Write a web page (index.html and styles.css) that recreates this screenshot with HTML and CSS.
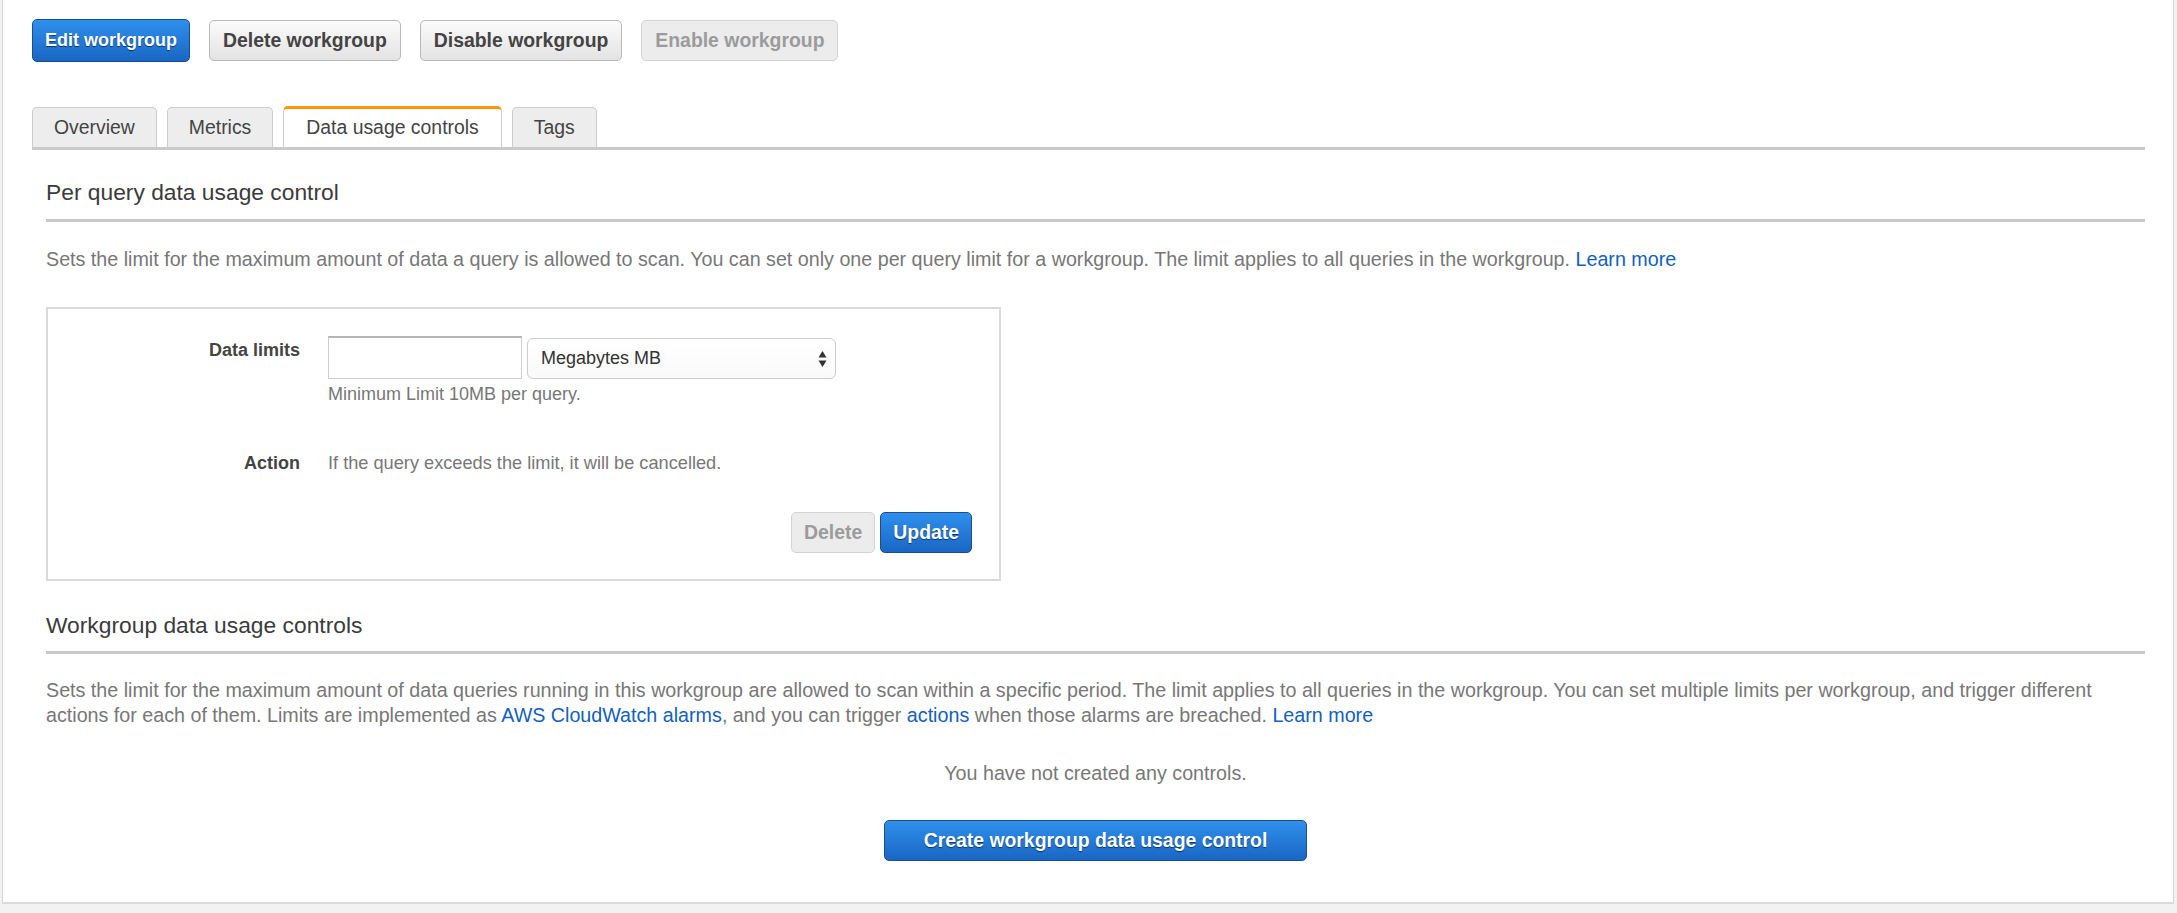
FILE: index.html
```html
<!DOCTYPE html>
<html lang="en">
<head>
<meta charset="utf-8">
<title>Workgroup - Data usage controls</title>
<link rel="stylesheet" href="styles.css">
</head>
<body>
<div class="panel">
  <div class="actions">
    <button class="btn btn-primary">Edit workgroup</button>
    <button class="btn btn-secondary">Delete workgroup</button>
    <button class="btn btn-secondary">Disable workgroup</button>
    <button class="btn btn-disabled">Enable workgroup</button>
  </div>

  <div class="tabs">
    <div class="tab">Overview</div>
    <div class="tab">Metrics</div>
    <div class="tab tab-active">Data usage controls</div>
    <div class="tab">Tags</div>
  </div>

  <div class="tab-content">
    <section class="section">
      <h2 class="section-title">Per query data usage control</h2>
      <p class="desc">Sets the limit for the maximum amount of data a query is allowed to scan. You can set only one per query limit for a workgroup. The limit applies to all queries in the workgroup. <a class="link" href="#">Learn more</a></p>

      <div class="form-box">
        <div class="form-row">
          <div class="form-label">Data limits</div>
          <div class="form-field">
            <div class="field-inputs">
              <div class="text-input"></div>
              <div class="select">
                <span>Megabytes MB</span>
                <svg class="select-arrows" width="9" height="18" viewBox="0 0 9 18"><path d="M4.5 1 L8.5 7.5 L0.5 7.5 Z" fill="#333"/><path d="M0.5 10.5 L8.5 10.5 L4.5 17 Z" fill="#333"/></svg>
              </div>
            </div>
            <div class="hint">Minimum Limit 10MB per query.</div>
          </div>
        </div>
        <div class="form-row form-row-action">
          <div class="form-label">Action</div>
          <div class="form-field">
            <div class="action-text">If the query exceeds the limit, it will be cancelled.</div>
          </div>
        </div>
        <div class="form-footer">
          <button class="btn btn-disabled btn-small">Delete</button>
          <button class="btn btn-primary btn-small">Update</button>
        </div>
      </div>
    </section>

    <section class="section section-second">
      <h2 class="section-title">Workgroup data usage controls</h2>
      <p class="desc">
        <span class="desc-line">Sets the limit for the maximum amount of data queries running in this workgroup are allowed to scan within a specific period. The limit applies to all queries in the workgroup. You can set multiple limits per workgroup, and trigger different</span>
        <span class="desc-line"><span>actions for each of them. Limits are implemented as</span> <a class="link" href="#">AWS CloudWatch alarms</a><span>, and you can trigger</span> <a class="link" href="#">actions</a> <span>when those alarms are breached.</span> <a class="link" href="#">Learn more</a></span>
      </p>
      <div class="empty">
        <p class="empty-text">You have not created any controls.</p>
        <button class="btn btn-primary btn-create">Create workgroup data usage control</button>
      </div>
    </section>
  </div>
</div>
</body>
</html>
```

FILE: styles.css
```css
* {
  box-sizing: border-box;
}

html, body {
  margin: 0;
  padding: 0;
}

body {
  background: #f2f2f2;
  font-family: "Liberation Sans", Arial, Helvetica, sans-serif;
  color: #444;
  width: 2177px;
  height: 913px;
  overflow: hidden;
}

.panel {
  margin-left: 2px;
  width: 2172px;
  height: 904px;
  background: #fff;
  border-left: 1px solid #d6d6d6;
  border-right: 1px solid #d6d6d6;
  border-bottom: 2px solid #dcdcdc;
  padding: 19px 28px 0 29px;
}

/* ---------- buttons ---------- */
.actions {
  display: flex;
  align-items: center;
  gap: 19px;
  height: 43px;
}

.btn {
  font-family: "Liberation Sans", Arial, Helvetica, sans-serif;
  font-weight: bold;
  font-size: 19.4px;
  border-radius: 5px;
  padding: 0 13px;
  height: 41px;
  cursor: pointer;
  white-space: nowrap;
}

.btn-primary {
  color: #fff;
  background: linear-gradient(#2f90ec, #1a66c4);
  border: 1px solid #1a4e8c;
  text-shadow: 0 1px 1px rgba(0, 0, 0, 0.55);
}

.actions .btn-primary {
  height: 43px;
  font-size: 18px;
  padding: 0 12px;
}

.btn-secondary {
  color: #444;
  background: linear-gradient(#fbfbfb, #e3e3e3);
  border: 1px solid #b8b8b8;
}

.btn-disabled {
  color: #9b9b9b;
  background: #ececec;
  border: 1px solid #d3d3d3;
}

/* ---------- tabs ---------- */
.tabs {
  display: flex;
  align-items: flex-end;
  gap: 10px;
  margin-top: 44px;
  border-bottom: 3px solid #cacaca;
  height: 44px;
}

.tab {
  height: 40px;
  padding: 0 21px;
  font-size: 19.4px;
  line-height: 38px;
  color: #444;
  background: #ededed;
  border: 1px solid #cccccc;
  border-bottom: none;
  border-radius: 5px 5px 0 0;
}

.tab-active {
  height: 41px;
  padding: 0 22px;
  background: #fff;
  border-top: 3px solid #ff9900;
  line-height: 37px;
}

/* ---------- content ---------- */
.tab-content {
  padding-left: 14px;
}

.section-title {
  margin: 27px 0 0;
  font-size: 22.8px;
  font-weight: normal;
  line-height: 30px;
  color: #3b3b3b;
  padding-bottom: 12px;
  border-bottom: 3px solid #cacaca;
}

.desc {
  margin: 25px 0 0;
  font-size: 19.7px;
  line-height: 25px;
  color: #777;
}

.desc-line {
  display: block;
  white-space: nowrap;
}

.link {
  color: #1260bf;
  text-decoration: none;
}

/* ---------- form box ---------- */
.form-box {
  width: 955px;
  margin-top: 35px;
  border: 2px solid #dadada;
  padding: 27px 27px 26px 0;
}

.form-row {
  display: flex;
  gap: 28px;
}

.form-label {
  width: 252px;
  text-align: right;
  font-weight: bold;
  font-size: 18px;
  line-height: 25px;
  padding-top: 2px;
  color: #444;
}

.field-inputs {
  display: flex;
  align-items: flex-end;
  gap: 5px;
}

.text-input {
  width: 194px;
  height: 43px;
  border: 1px solid #cfcfcf;
  border-top: 2px solid #b5b5b5;
  background: #fff;
}

.select {
  width: 309px;
  height: 41px;
  border: 1px solid #cccccc;
  border-radius: 6px;
  background: linear-gradient(#ffffff, #fafafa);
  display: flex;
  align-items: center;
  justify-content: space-between;
  padding: 0 8px 0 13px;
  font-size: 18px;
  color: #333;
}

.select-arrows {
  display: block;
}

.hint {
  margin-top: 4px;
  font-size: 18px;
  line-height: 22px;
  color: #777;
}

.form-row-action {
  margin-top: 46px;
}

.form-row-action .form-label {
  padding-top: 0;
}

.action-text {
  font-size: 18.2px;
  line-height: 25px;
  color: #777;
}

.form-footer {
  display: flex;
  justify-content: flex-end;
  gap: 5px;
  margin-top: 36px;
}

.btn-small {
  height: 41px;
  padding: 0 12px;
}

/* ---------- second section ---------- */
.section-second .section-title {
  margin-top: 29px;
  padding-bottom: 11px;
}

.section-second .desc {
  margin-top: 24px;
}

.empty {
  display: flex;
  flex-direction: column;
  align-items: center;
}

.empty-text {
  margin: 33px 0 0;
  font-size: 19.7px;
  line-height: 25px;
  color: #777;
}

.btn-create {
  margin-top: 34px;
  width: 423px;
  height: 41px;
}
```
